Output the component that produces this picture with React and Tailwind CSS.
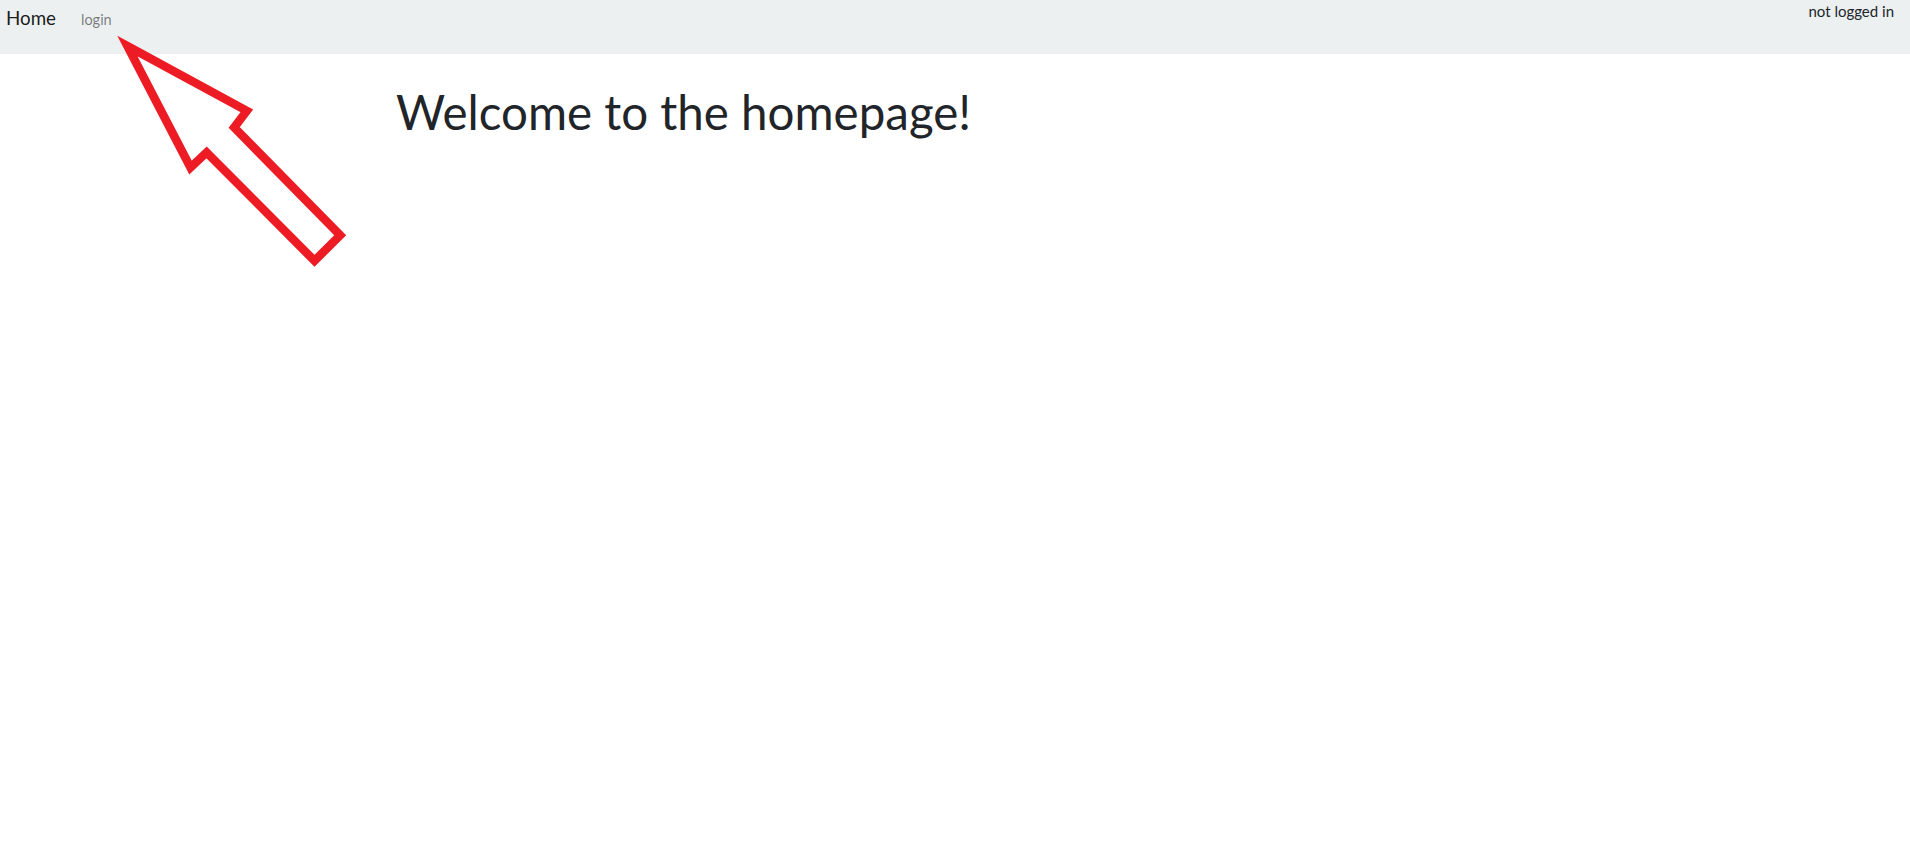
import React from "react";

const Arrow = () => (
  <svg
    width="360"
    height="280"
    viewBox="0 0 360 280"
    className="absolute left-0 top-0 pointer-events-none"
  >
    <polygon
      points="127.4,46 246.8,110.8 234.2,127.5 340.2,235.2 314.5,260.8 206.6,152.5 190.5,167.5"
      fill="none"
      stroke="#ed1c24"
      strokeWidth="8.5"
      strokeLinejoin="miter"
      strokeMiterlimit="10"
    />
  </svg>
);

export default function App() {
  return (
    <div
      className="relative min-h-screen bg-white text-[#212529]"
      style={{ fontFamily: "Lato, 'Open Sans', sans-serif" }}
    >
      <nav className="flex h-[54px] items-start justify-between bg-[#ecf0f1]">
        <div className="flex items-baseline pl-[6px] pt-[3px]">
          <a className="text-[18.75px] leading-[30px] text-black/90">Home</a>
          <a className="ml-[25px] text-[14.5px] text-black/50">login</a>
        </div>
        <div className="pr-[16px] pt-[1px] text-[15px] leading-[20px]">not logged in</div>
      </nav>

      <div className="pl-[396px] pt-[29px]">
        <h1 className="text-[47.5px] font-normal leading-[1.2]">Welcome to the homepage!</h1>
      </div>

      <Arrow />
    </div>
  );
}
